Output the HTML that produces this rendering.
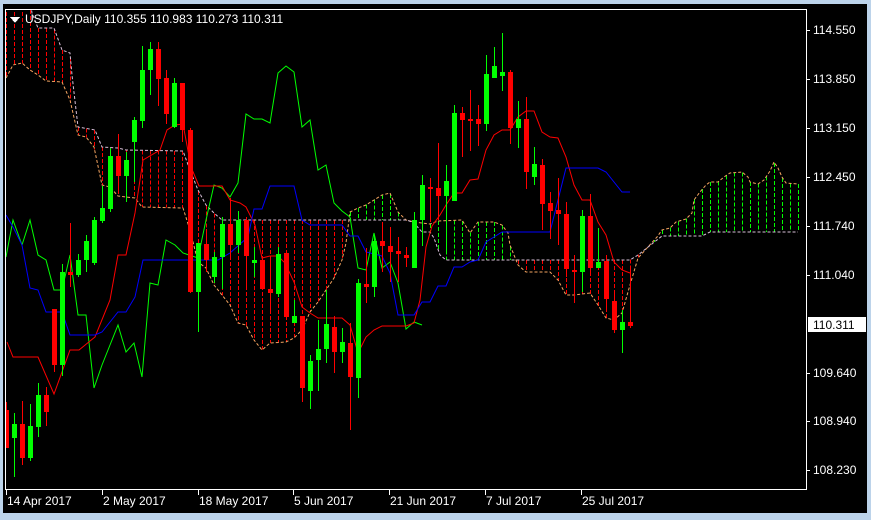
<!DOCTYPE html>
<html><head><meta charset="utf-8"><style>
html,body{margin:0;padding:0;width:871px;height:520px;overflow:hidden;background:#bcd3ea;}
#win{position:absolute;left:3px;top:4px;width:864px;height:509px;background:#000;}
svg{position:absolute;left:0;top:0;}
text{font-family:"Liberation Sans",sans-serif;font-size:12px;fill:#fff;}
</style></head><body>
<div id="win"></div>
<svg id="s" width="871" height="520" xmlns="http://www.w3.org/2000/svg" shape-rendering="crispEdges">
<defs><clipPath id="cp"><rect x="6" y="10" width="800" height="479"/></clipPath></defs>
<g id="g" clip-path="url(#cp)"></g>
<rect x="5.5" y="9.5" width="801" height="480" fill="none" stroke="#fff"/>
<polygon points="10,17 20,17 15,23" fill="#fff"/>
<text x="25" y="23">USDJPY,Daily  110.355 110.983 110.273 110.311</text>
<g id="ax"></g>
</svg>
<script>
var NS="http://www.w3.org/2000/svg",g=document.getElementById('g'),ax=document.getElementById('ax');
function el(p,t,a){var e=document.createElementNS(NS,t);for(var k in a)e.setAttribute(k,a[k]);p.appendChild(e);return e;}
function pl(pts,c,d){el(g,'polyline',{points:pts.map(function(p){return p[0]+','+p[1]}).join(' '),fill:'none',stroke:c,'stroke-width':1,'stroke-dasharray':d||'none','shape-rendering':'auto'});}
function interp(pts,x){if(x<=pts[0][0])return pts[0][1];for(var i=1;i<pts.length;i++){if(x<=pts[i][0]){var a=pts[i-1],b=pts[i];return a[1]+(b[1]-a[1])*(x-a[0])/(b[0]-a[0]);}}return pts[pts.length-1][1];}
var A=[[6,78],[13,65],[22,63],[30,70],[38,75],[46,81],[62,82],[70,100],[78,135],[86,137],[94,147],[102,185],[110,187],[118,196],[126,197],[135,198],[142,207],[183,208],[190,230],[198,262],[206,268],[214,285],[222,295],[230,305],[238,323],[246,325],[254,340],[262,350],[270,343],[286,342],[294,338],[302,330],[310,312],[318,302],[326,290],[334,278],[342,260],[346,243],[350,212],[358,208],[366,205],[374,200],[382,195],[390,193],[398,212],[406,220],[414,222],[430,224],[438,221],[462,220],[470,233],[478,222],[494,222],[502,225],[508,233],[510,245],[518,265],[526,272],[550,272],[558,280],[566,295],[574,295],[590,293],[598,305],[606,318],[614,320],[622,313],[630,285],[638,258],[657,237],[662,230],[670,228],[676,222],[686,219],[692,213],[694,200],[700,192],[706,185],[710,182],[718,182],[724,177],[730,173],[742,172],[748,177],[750,182],[758,184],[764,180],[770,171],[774,162],[778,168],[782,177],[786,183],[798,184]];
var B=[[6,-30],[25,-30],[32,13],[38,28],[54,28],[62,50],[70,53],[72,75],[78,127],[95,130],[102,147],[118,148],[126,150],[183,151],[190,170],[198,190],[206,205],[214,213],[222,220],[407,220],[414,223],[422,232],[430,232],[434,238],[440,255],[446,260],[630,260],[638,255],[662,236],[702,236],[706,234],[710,232],[798,232]];
// hatch
for(var k=0;k<100;k++){var x=6.5+8*k;if(x>799)break;var a=interp(A,x),b=interp(B,x);
 el(g,'line',{x1:x,y1:Math.min(a,b),x2:x,y2:Math.max(a,b),stroke:(a<b?'#00ff00':'#ff0000'),'stroke-dasharray':'4,2'});}
pl(A,'#f4a460','3,2');pl(B,'#d8bfd8','3,2');
var TK=[[7,342],[13,357],[38,357],[54,394],[70,350],[79,350],[95,337],[110,300],[118,255],[126,255],[135,213],[143,160],[160,150],[167,130],[175,125],[183,124],[191,167],[199,186],[222,186],[230,200],[240,203],[246,207],[255,225],[262,258],[270,256],[278,256],[285,263],[294,282],[302,307],[310,313],[318,318],[342,318],[350,325],[358,353],[366,337],[374,330],[382,326],[406,326],[414,323],[420,300],[426,247],[432,226],[440,215],[446,205],[454,193],[462,193],[470,180],[478,179],[486,150],[494,135],[502,130],[510,130],[518,117],[526,111],[534,111],[542,132],[550,137],[558,138],[566,157],[574,185],[582,200],[590,200],[598,222],[606,235],[614,262],[622,270],[630,273]];
var KJ=[[6,215],[13,227],[22,245],[30,288],[38,290],[46,312],[62,312],[70,335],[95,335],[102,332],[118,312],[126,312],[135,297],[143,260],[218,260],[230,253],[248,237],[254,209],[262,209],[270,186],[294,186],[302,220],[310,225],[342,225],[350,236],[358,236],[366,252],[382,256],[390,273],[398,315],[414,315],[422,302],[430,302],[438,286],[446,286],[454,267],[462,267],[470,262],[478,260],[486,242],[494,237],[502,232],[550,232],[566,168],[598,168],[606,172],[622,192],[630,192]];
var CH=[[6,257],[13,220],[22,245],[30,220],[38,255],[46,260],[54,290],[62,290],[70,255],[78,315],[86,315],[94,388],[102,365],[110,345],[118,325],[126,352],[134,343],[142,377],[150,283],[158,285],[166,240],[175,245],[183,253],[198,258],[206,220],[214,185],[222,188],[230,197],[238,183],[246,114],[254,119],[262,119],[270,123],[278,73],[286,66],[294,72],[302,127],[310,120],[318,170],[326,165],[334,203],[342,211],[350,217],[358,268],[366,270],[374,233],[382,268],[390,262],[398,283],[406,329],[414,322],[422,325]];
pl(CH,'#00ff00');pl(TK,'#ff0000');pl(KJ,'#0000ff');
var C=[['r',402,410,448,448],['g',413,424,438,477],['r',401,424,458,465],['g',404,426,458,461],['g',383,395,427,437],['r',387,395,412,426],['r',309,309,365,372],['g',264,272,365,376],['r',223,272,275,287],['g',254,260,275,277],['g',235,241,260,272],['g',217,220,263,265],['g',186,208,221,223],['g',148,156,209,212],['r',134,156,176,192],['g',152,160,176,202],['g',117,120,142,182],['g',46,70,121,128],['g',42,49,70,95],['r',42,49,79,106],['r',70,78,114,124],['g',78,83,127,128],['r',83,83,130,142],['r',128,130,292,293],['g',243,243,292,332],['r',229,244,260,272],['g',252,257,277,283],['g',217,224,257,289],['r',198,224,245,258],['g',211,220,245,253],['r',217,220,256,287],['g',247,260,263,277],['r',260,260,289,289],['r',260,289,293,313],['g',247,254,294,297],['r',253,253,317,317],['g',300,316,323,323],['r',316,316,388,402],['g',355,361,391,409],['g',320,349,360,391],['g',290,324,349,363],['r',316,327,352,373],['g',328,342,352,363],['r',323,343,377,430],['g',279,283,378,398],['r',248,284,287,303],['g',235,241,287,297],['r',222,241,246,272],['r',227,246,252,282],['r',237,251,254,282],['r',247,255,258,267],['g',212,220,268,268],['g',175,185,220,246],['r',178,187,189,222],['r',143,188,196,220],['g',165,181,196,253],['g',105,113,201,201],['r',107,113,120,157],['r',90,119,120,151],['r',105,119,124,146],['g',55,74,124,131],['g',47,66,78,78],['g',33,72,76,91],['r',70,72,128,144],['g',101,119,128,148],['r',97,119,172,189],['g',147,164,177,185],['r',159,165,204,230],['r',192,203,211,239],['r',178,210,214,245],['r',202,214,269,277],['r',255,270,272,303],['g',210,216,272,292],['r',194,216,268,272],['g',228,262,268,268],['r',255,261,299,311],['r',290,301,330,333],['g',310,322,330,353],['r',268,322,326,328]];
C.forEach(function(c,k){var x=6+8*k,col=c[0]=='r'?'#ff0000':'#00ff00';
 el(g,'rect',{x:x,y:c[1],width:1,height:Math.max(1,c[4]-c[1]),fill:col});
 el(g,'rect',{x:x-2,y:c[2],width:5,height:Math.max(2,c[3]-c[2]),fill:col});});
var P=[['114.550',30],['113.850',79],['113.150',128],['112.450',177],['111.740',226],['111.040',275],['109.640',373],['108.940',421],['108.230',470]];
P.forEach(function(p){el(ax,'rect',{x:807,y:p[1],width:3,height:1,fill:'#fff'});var t=el(ax,'text',{x:813,y:p[1]+4});t.textContent=p[0];});
el(ax,'rect',{x:808,y:317,width:58,height:15,fill:'#fff'});
var t=el(ax,'text',{x:813,y:329,style:'fill:#000'});t.textContent='110.311';
var D=[['14 Apr 2017',6],['2 May 2017',102],['18 May 2017',198],['5 Jun 2017',293],['21 Jun 2017',389],['7 Jul 2017',485],['25 Jul 2017',581]];
D.forEach(function(d){el(ax,'rect',{x:d[1],y:490,width:1,height:5,fill:'#fff'});var t=el(ax,'text',{x:d[1]+1,y:505});t.textContent=d[0];});
</script>
</body></html>
